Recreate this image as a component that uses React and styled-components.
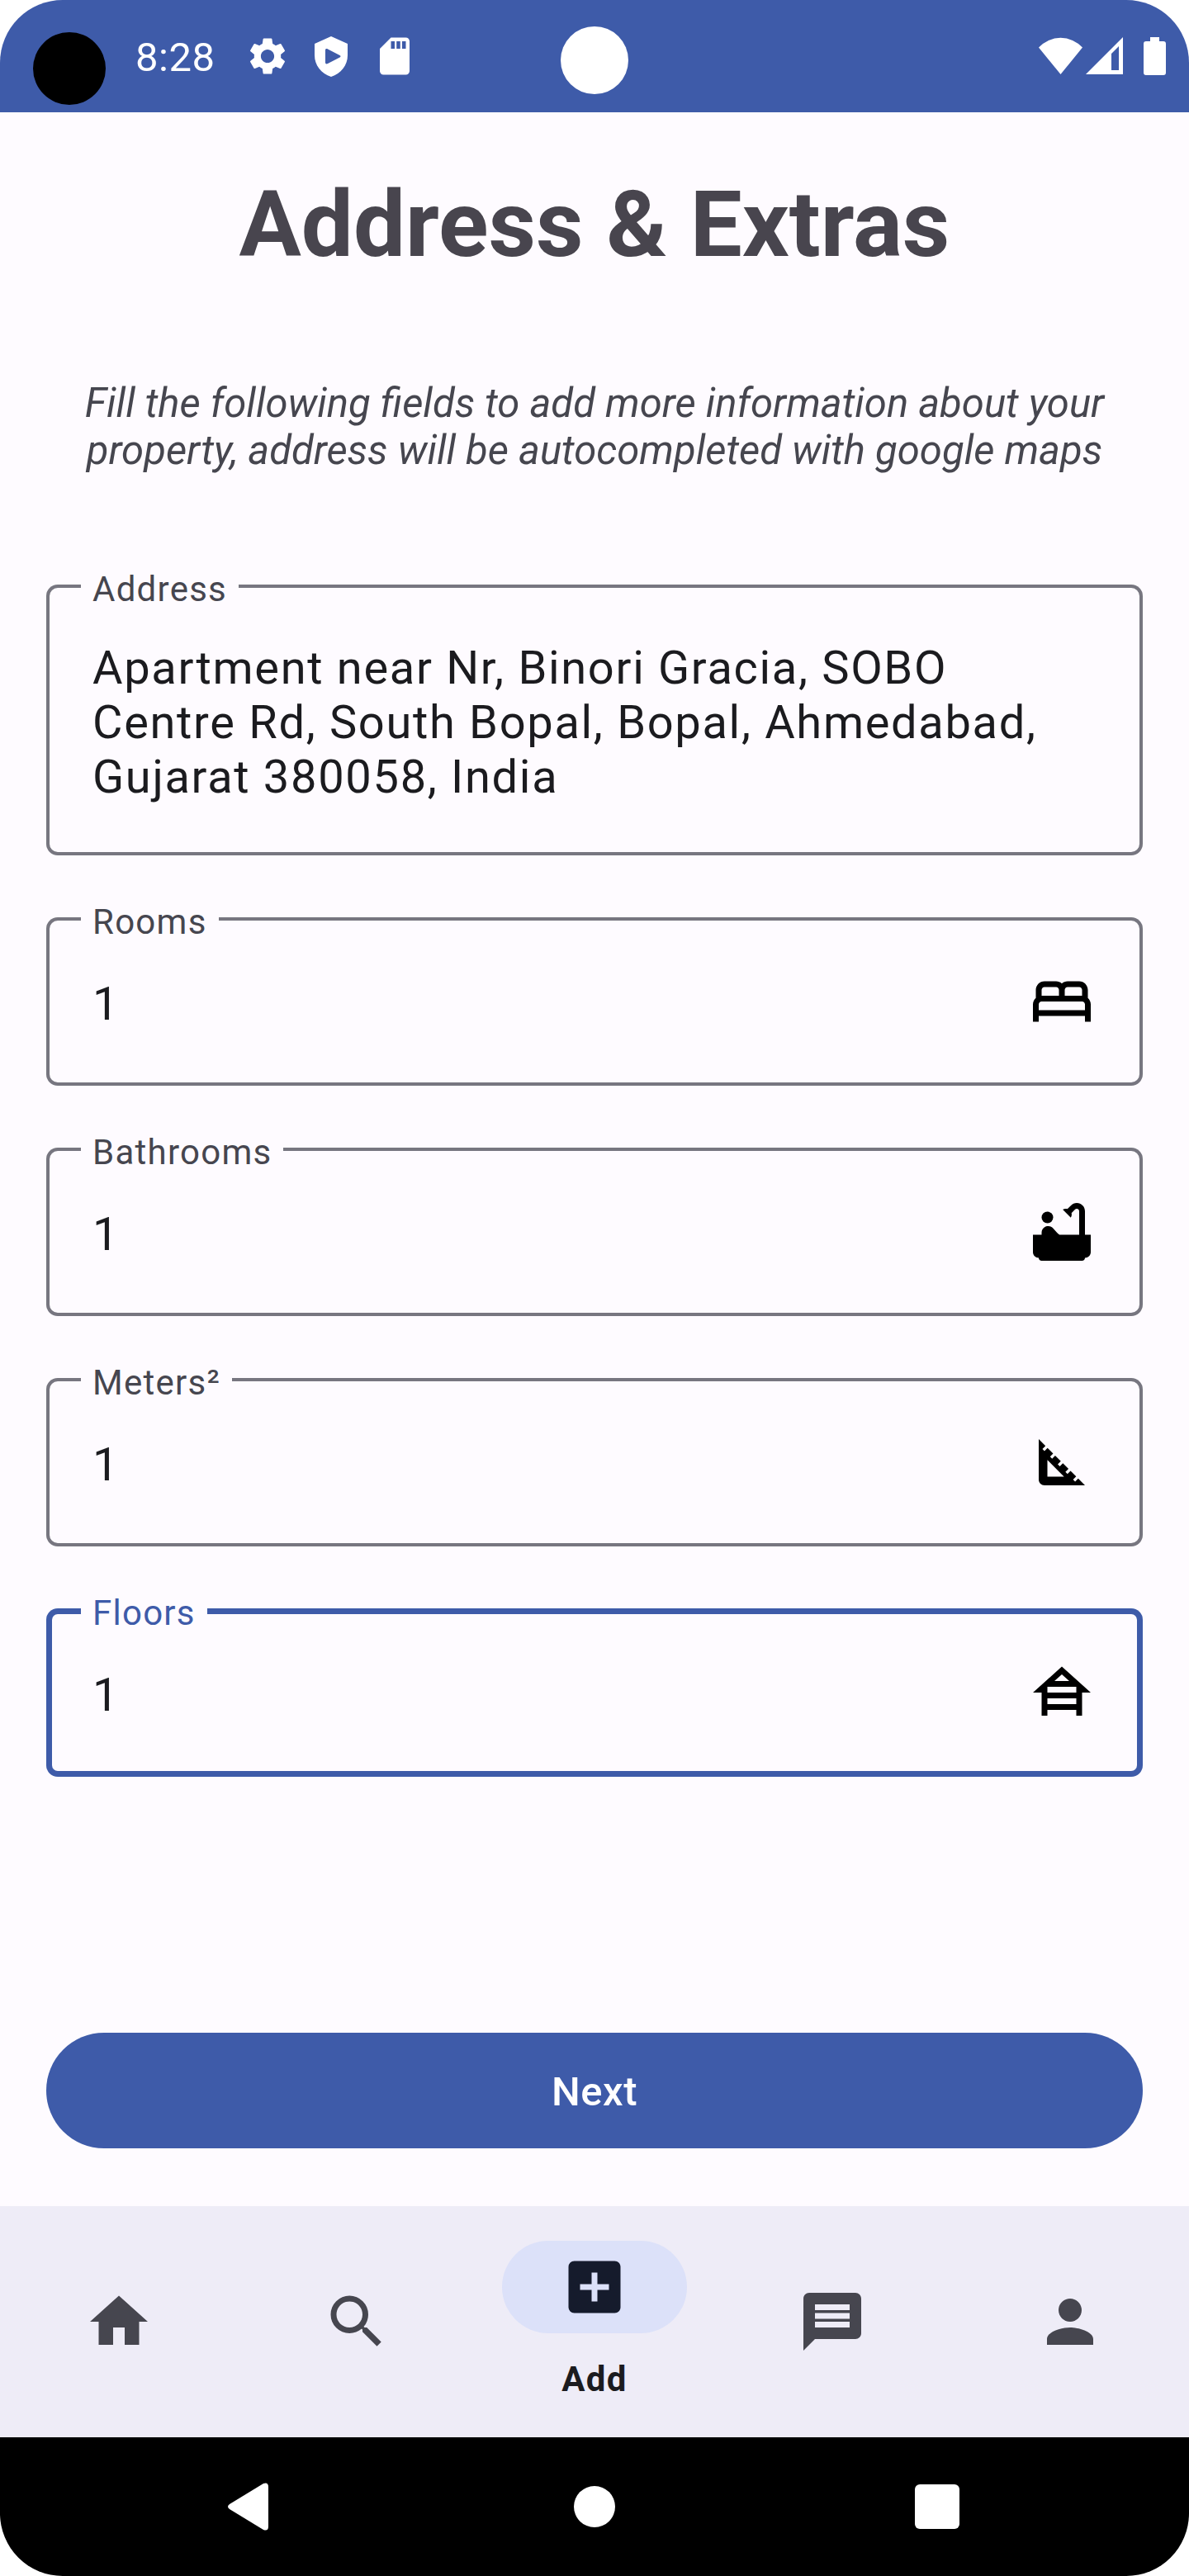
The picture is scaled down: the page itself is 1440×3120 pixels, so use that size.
import React, { useState } from "react";
import styled, { createGlobalStyle } from "styled-components";
import {
  MdSettings,
  MdBathtub,
  MdSquareFoot,
  MdHome,
  MdSearch,
  MdAddBox,
  MdMessage,
  MdPerson,
} from "react-icons/md";

const color = {
  primary: "#3e5ba9",
  surface: "#fefbff",
  navSurface: "#eeecf7",
  indicator: "#dce1f9",
  onIndicator: "#151b2c",
  text: "#1b1b1f",
  muted: "#46464f",
  outline: "#777680",
};

const GlobalStyle = createGlobalStyle`
  *, *::before, *::after { box-sizing: border-box; }
  body { margin: 0; background: #ffffff; }
  button, input, textarea { font-family: inherit; }
`;

const Screen = styled.div`
  display: flex;
  flex-direction: column;
  min-height: 100vh;
  overflow: hidden;
  border-radius: 76px;
  background: ${color.surface};
  color: ${color.text};
  font-family: Roboto, "Liberation Sans", sans-serif;
`;

const StatusBar = styled.header`
  position: relative;
  display: flex;
  align-items: center;
  justify-content: space-between;
  height: 136px;
  padding: 0 28px 0 40px;
  background: ${color.primary};
  color: #ffffff;
`;

const StatusGroup = styled.div`
  display: flex;
  align-items: center;
`;

const Bubble = styled.span`
  width: 88px;
  height: 88px;
  margin: 30px 36px 0 0;
  align-self: flex-start;
  border-radius: 50%;
  background: #000000;
`;

const Clock = styled.time`
  margin-right: 37px;
  padding-top: 4px;
  font-size: 49px;
  letter-spacing: 0.01em;
  line-height: 58px;
`;

const StatusIcons = styled.div`
  display: flex;
  gap: 23px;
`;

const Camera = styled.span`
  position: absolute;
  top: 32px;
  left: 50%;
  width: 82px;
  height: 82px;
  margin-left: -41px;
  border-radius: 50%;
  background: #ffffff;
`;

const Signals = styled.div`
  display: flex;
  align-items: center;
  gap: 4px;

  svg:last-child { margin-left: 21px; }
`;

const Content = styled.main`
  display: flex;
  flex: 1;
  flex-direction: column;
  padding: 70px 56px;
`;

const Title = styled.h1`
  margin: 0;
  color: #48454e;
  font-size: 112px;
  font-weight: 700;
  line-height: 132px;
  text-align: center;
`;

const Intro = styled.p`
  margin: 122px 28px 0;
  color: ${color.muted};
  font-size: 49px;
  font-style: italic;
  line-height: 57px;
  text-align: center;
`;

const Form = styled.form`
  display: flex;
  flex: 1;
  flex-direction: column;
  gap: 75px;
  margin-top: 134px;
`;

const Field = styled.div`
  position: relative;
  display: flex;
  align-items: center;
  padding: ${(p) => (p.$multiline ? "68px 56px 62px" : "0 56px")};
  border-radius: 14px;
  box-shadow: inset 0 0 0
    ${(p) => (p.$active ? `7px ${color.primary}` : `4px ${color.outline}`)};
`;

const FieldLabel = styled.label`
  position: absolute;
  top: -19px;
  left: 42px;
  padding: 0 14px;
  background: ${color.surface};
  color: ${(p) => (p.$active ? color.primary : color.muted)};
  font-size: 42px;
  letter-spacing: 0.03em;
  line-height: 50px;
`;

const controlText = `
  flex: 1;
  min-width: 0;
  border: 0;
  outline: 0;
  background: transparent;
  color: ${color.text};
  font-size: 56px;
  letter-spacing: 0.03em;
  line-height: 66px;
`;

const TextInput = styled.input`
  ${controlText}
  padding: 72px 0 66px;
`;

const TextArea = styled.textarea`
  ${controlText}
  display: block;
  padding: 0;
  overflow: hidden;
  resize: none;
`;

const FieldIcon = styled.span`
  display: flex;
  color: #000000;
`;

const NextButton = styled.button`
  height: 140px;
  margin-top: auto;
  padding: 4px 56px 0;
  border: 0;
  border-radius: 70px;
  background: ${color.primary};
  color: #ffffff;
  font-size: 49px;
  font-weight: 500;
  letter-spacing: 0.01em;
  line-height: 58px;
`;

const BottomNav = styled.nav`
  display: flex;
  height: 280px;
  background: ${color.navSurface};
`;

const NavItem = styled.a`
  display: flex;
  flex: 1;
  flex-direction: column;
  align-items: center;
  justify-content: center;
  gap: 28px;
  color: ${(p) => (p.$active ? color.onIndicator : color.muted)};
  text-decoration: none;
`;

const Indicator = styled.span`
  display: flex;
  align-items: center;
  justify-content: center;
  width: 224px;
  height: 112px;
  border-radius: 56px;
  background: ${(p) => (p.$active ? color.indicator : "transparent")};
`;

const NavLabel = styled.span`
  color: ${color.text};
  font-size: 42px;
  font-weight: 700;
  letter-spacing: 0.03em;
  line-height: 56px;
`;

const SystemBar = styled.footer`
  display: flex;
  align-items: center;
  justify-content: center;
  gap: 331px;
  height: 168px;
  background: #000000;
`;

const SystemButton = styled.button`
  display: flex;
  padding: 0;
  border: 0;
  background: transparent;
`;

const ShieldIcon = () => (
  <svg width="54" height="54" viewBox="0 0 54 54" fill="#fff" aria-hidden="true">
    <path
      fillRule="evenodd"
      d="M27 3L47 12V26C47 38 39 48 27 52C15 48 7 38 7 26V12ZM23 18.500C21.500 17.500 20 18 20 20V34.500C20 36.500 21.500 37 23 36L37.500 28.500C38.800 27.800 38.800 26.700 37.500 26Z"
    />
  </svg>
);

const SdCardIcon = () => (
  <svg width="54" height="54" viewBox="0 0 24 24" fill="#fff" aria-hidden="true">
    <path
      fillRule="evenodd"
      d="M18 2h-8L4 8v12c0 1.100.9 2 2 2h12c1.100 0 2-.9 2-2V4c0-1.100-.9-2-2-2zM10 4h2v4h-2zM13 4h2v4h-2zM16 4h2v4h-2z"
    />
  </svg>
);

const WifiIcon = () => (
  <svg width="53" height="46" viewBox="0 0 53 46" fill="#fff" aria-hidden="true">
    <path d="M0 12.500A36 36 0 0 1 53 12.500L26.500 45Z" />
  </svg>
);

const CellIcon = () => (
  <svg width="45" height="46" viewBox="0 0 45 46" fill="#fff" aria-hidden="true">
    <path fillRule="evenodd" d="M0 45L45 0V45ZM31 20L40 11V40H31Z" />
  </svg>
);

const BatteryIcon = () => (
  <svg width="27" height="46" viewBox="0 0 27 46" fill="#fff" aria-hidden="true">
    <path d="M8 0h11v5h5a3 3 0 0 1 3 3v35a3 3 0 0 1-3 3H3a3 3 0 0 1-3-3V8a3 3 0 0 1 3-3h5z" />
  </svg>
);

const BedIcon = () => (
  <svg width="84" height="84" viewBox="0 0 24 24" fill="currentColor" aria-hidden="true">
    <path d="M21 10.780V8c0-1.650-1.350-3-3-3h-4c-.77 0-1.470.3-2 .78C11.470 5.300 10.770 5 10 5H6C4.350 5 3 6.350 3 8v2.780c-.61.55-1 1.340-1 2.220v6h2v-2h16v2h2v-6c0-.88-.39-1.670-1-2.220zM14 7h4c.55 0 1 .45 1 1v2h-6V8c0-.55.45-1 1-1zM5 8c0-.55.45-1 1-1h4c.55 0 1 .45 1 1v2H5V8zm-1 7v-2c0-.55.45-1 1-1h14c.55 0 1 .45 1 1v2H4z" />
  </svg>
);

const FloorsIcon = () => (
  <svg width="84" height="84" viewBox="0 0 24 24" fill="currentColor" aria-hidden="true">
    <path
      fillRule="evenodd"
      d="M12 3L2 12h3v8h2v-2h10v2h2v-8h3zM12 5.700L14.560 8H9.440zM7 10h10v2H7zM7 14h10v2H7z"
    />
  </svg>
);

const numberFields = [
  { id: "rooms", label: "Rooms", icon: <BedIcon /> },
  { id: "bathrooms", label: "Bathrooms", icon: <MdBathtub size={84} /> },
  { id: "meters", label: "Meters²", icon: <MdSquareFoot size={84} /> },
  { id: "floors", label: "Floors", icon: <FloorsIcon /> },
];

const navItems = [
  { id: "home", label: "Home", Icon: MdHome },
  { id: "search", label: "Search", Icon: MdSearch },
  { id: "add", label: "Add", Icon: MdAddBox },
  { id: "messages", label: "Messages", Icon: MdMessage },
  { id: "profile", label: "Profile", Icon: MdPerson },
];

export default function App() {
  const [activeField, setActiveField] = useState("floors");
  const [activeTab, setActiveTab] = useState("add");

  return (
    <>
      <GlobalStyle />
      <Screen>
        <StatusBar>
          <StatusGroup>
            <Bubble />
            <Clock>8:28</Clock>
            <StatusIcons>
              <MdSettings size={54} />
              <ShieldIcon />
              <SdCardIcon />
            </StatusIcons>
          </StatusGroup>
          <Camera />
          <Signals>
            <WifiIcon />
            <CellIcon />
            <BatteryIcon />
          </Signals>
        </StatusBar>

        <Content>
          <Title>Address &amp; Extras</Title>
          <Intro>
            Fill the following fields to add more information about your
            property, address will be autocompleted with google maps
          </Intro>
          <Form onSubmit={(e) => e.preventDefault()}>
            <Field $multiline $active={activeField === "address"}>
              <FieldLabel htmlFor="address" $active={activeField === "address"}>
                Address
              </FieldLabel>
              <TextArea
                id="address"
                rows={3}
                spellCheck={false}
                onFocus={() => setActiveField("address")}
                defaultValue="Apartment near Nr, Binori Gracia, SOBO Centre Rd, South Bopal, Bopal, Ahmedabad, Gujarat 380058, India"
              />
            </Field>
            {numberFields.map(({ id, label, icon }) => (
              <Field key={id} $active={activeField === id}>
                <FieldLabel htmlFor={id} $active={activeField === id}>
                  {label}
                </FieldLabel>
                <TextInput
                  id={id}
                  inputMode="numeric"
                  defaultValue="1"
                  onFocus={() => setActiveField(id)}
                />
                <FieldIcon>{icon}</FieldIcon>
              </Field>
            ))}
            <NextButton type="submit">Next</NextButton>
          </Form>
        </Content>

        <BottomNav>
          {navItems.map(({ id, label, Icon }) => {
            const active = activeTab === id;
            return (
              <NavItem
                key={id}
                href={`#${id}`}
                aria-label={label}
                $active={active}
                onClick={() => setActiveTab(id)}
              >
                <Indicator $active={active}>
                  <Icon size={84} />
                </Indicator>
                {active && <NavLabel>{label}</NavLabel>}
              </NavItem>
            );
          })}
        </BottomNav>

        <SystemBar>
          <SystemButton aria-label="Back">
            <svg width="84" height="84" viewBox="0 0 84 84" fill="#fff">
              <path d="M15 39L56 14Q62 12 62 18V66Q62 72 56 70L15 45Q11 42 15 39Z" />
            </svg>
          </SystemButton>
          <SystemButton aria-label="Home">
            <svg width="84" height="84" viewBox="0 0 84 84" fill="#fff">
              <circle cx="42" cy="42" r="25" />
            </svg>
          </SystemButton>
          <SystemButton aria-label="Recent apps">
            <svg width="84" height="84" viewBox="0 0 84 84" fill="#fff">
              <rect x="15" y="15" width="54" height="54" rx="6" />
            </svg>
          </SystemButton>
        </SystemBar>
      </Screen>
    </>
  );
}
